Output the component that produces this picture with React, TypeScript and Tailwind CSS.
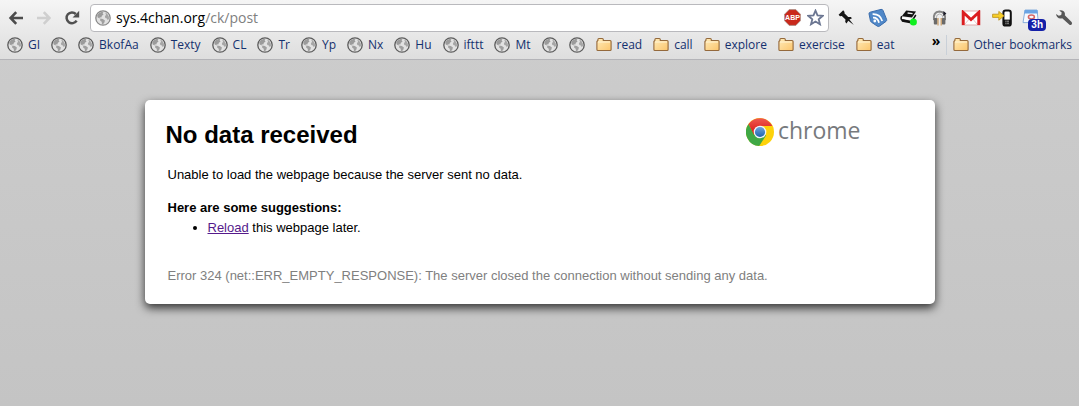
import type { ReactNode } from 'react';

type Bookmark = { label: string; kind: 'site' | 'folder'; name?: string };

const bookmarks: Bookmark[] = [
  { label: 'GI', kind: 'site' },
  { label: '', kind: 'site', name: 'Untitled bookmark' },
  { label: 'BkofAa', kind: 'site' },
  { label: 'Texty', kind: 'site' },
  { label: 'CL', kind: 'site' },
  { label: 'Tr', kind: 'site' },
  { label: 'Yp', kind: 'site' },
  { label: 'Nx', kind: 'site' },
  { label: 'Hu', kind: 'site' },
  { label: 'ifttt', kind: 'site' },
  { label: 'Mt', kind: 'site' },
  { label: '', kind: 'site', name: 'Untitled bookmark' },
  { label: '', kind: 'site', name: 'Untitled bookmark' },
  { label: 'read', kind: 'folder' },
  { label: 'call', kind: 'folder' },
  { label: 'explore', kind: 'folder' },
  { label: 'exercise', kind: 'folder' },
  { label: 'eat', kind: 'folder' },
];

function GlobeIcon({ light = false }: { light?: boolean }) {
  return (
    <svg width="16" height="16" viewBox="0 0 16 16" className="shrink-0" aria-hidden="true">
      <circle cx="8" cy="8" r="7.2" fill="#e2e2e2" stroke={light ? '#8a8a8a' : '#5c5c5c'} strokeWidth="1.3" />
      <path d="M2.2 5.2 4 3l3-1.3 1.4.8-.8 1.2 1 .9-1.7 1.2-.6 1.6-1.7-.2.3 1.3-2.2-1.1z" fill="#9b9b9b" />
      <path d="M5.3 8.6l2.6.4 2 1.4-.5 2-1.4 1.9-1 .1-.3-2.6-1.6-1.4z" fill="#a0a0a0" />
      <path d="M10.2 2.6l2 1.2 1.6 2.6.2 2.4-1.2 1.4-.9-1.7-1.6-.6-.4-1.8 1.2-1.1z" fill="#a6a6a6" />
    </svg>
  );
}

function FolderIcon() {
  return (
    <svg width="16" height="16" viewBox="0 0 16 16" className="shrink-0" aria-hidden="true">
      <defs>
        <linearGradient id="folder" x1="0" y1="0" x2="1" y2="1">
          <stop offset="0" stopColor="#ffebb9" />
          <stop offset="1" stopColor="#fbc56c" />
        </linearGradient>
      </defs>
      <path
        d="M.9 4.5 1.9 3.5V2.5q0-1 1-1h3.4q1 0 1 1v1h6.8q1 0 1 1v8q0 1-1 1H1.9q-1 0-1-1z"
        fill="url(#folder)"
        stroke="#94693c"
        strokeWidth="1.1"
      />
      <path d="M2 5h12" stroke="#fff4d6" strokeWidth="1" />
    </svg>
  );
}

function BackIcon() {
  return (
    <svg width="16" height="16" viewBox="0 0 16 16" fill="none" stroke="#4c4c4c" strokeWidth="2.6" aria-hidden="true">
      <path d="M15 8H3M8.2 2.2 2.6 8l5.6 5.8" />
    </svg>
  );
}

function ForwardIcon() {
  return (
    <svg width="16" height="16" viewBox="0 0 16 16" fill="none" stroke="#cfcfcf" strokeWidth="2.6" aria-hidden="true">
      <path d="M1 8h12M7.8 2.2 13.4 8l-5.6 5.8" />
    </svg>
  );
}

function ReloadIcon() {
  return (
    <svg width="16" height="16" viewBox="0 0 16 16" aria-hidden="true">
      <path d="M12.6 10.6A5.4 5.4 0 1 1 11.8 4" fill="none" stroke="#505050" strokeWidth="2.5" />
      <path d="M15.2.8v6.6H8.6z" fill="#505050" />
    </svg>
  );
}

function AdblockIcon() {
  return (
    <svg width="17" height="17" viewBox="0 0 17 17" aria-hidden="true">
      <path d="M5.2.6h6.6l4.6 4.6v6.6l-4.6 4.6H5.2L.6 11.8V5.2z" fill="#c9291c" stroke="#a89088" strokeWidth=".8" />
      <text x="8.5" y="11" textAnchor="middle" fontFamily="Liberation Sans, sans-serif" fontWeight="bold" fontSize="7" fill="#fff">
        ABP
      </text>
    </svg>
  );
}

function StarIcon() {
  return (
    <svg width="17" height="17" viewBox="0 0 17 17" aria-hidden="true">
      <path
        d="M8.5 1.6l2 4.8 5.2.4-4 3.4 1.3 5.1-4.5-2.8L4 15.3l1.3-5.1-4-3.4 5.2-.4z"
        fill="#fff"
        stroke="#6c7792"
        strokeWidth="1.8"
      />
    </svg>
  );
}

function PinIcon() {
  return (
    <svg width="18" height="18" viewBox="0 0 18 18" aria-hidden="true">
      <path d="M5.2 1.2 6.6 3l-.2 1.3 3.8 3.8 2.6-.2 1.2 1.3-2.6 1.2 4.4 5.6-5.6-4.2-1.6 2.6-1.4-1.4.3-2.6L3.8 7 2 7.2.6 5.8z" fill="#161616" />
    </svg>
  );
}

function FeedIcon() {
  return (
    <svg width="20" height="20" viewBox="0 0 20 20" aria-hidden="true">
      <path d="M2.2 4.2 13 1.4q1.5-.3 2 1l3.6 9q.4 1.2-.6 2l-6.6 4.8q-1 .6-2 0l-6-4q-.8-.6-1-1.6L1 5.8q-.1-1.2 1.2-1.6z" fill="#5088c8" stroke="#3a6cac" />
      <g fill="none" stroke="#fff" strokeWidth="1.7">
        <path d="M5 9.6q4.8-.2 6 5.2M4.6 6.2Q12 5.8 14.2 13" />
      </g>
      <circle cx="6.8" cy="13" r="1.4" fill="#fff" />
    </svg>
  );
}

function ReaderIcon() {
  return (
    <svg width="18" height="18" viewBox="0 0 18 18" aria-hidden="true">
      <path d="M6.2 1.5 16 2.6l-4 6L1.8 7.2z" fill="#111" />
      <path d="M7.6 4l5 .6" stroke="#eee" strokeWidth="1.4" />
      <path d="M1.8 7.2Q.4 9.4 1.8 11l9.6 2 4.4-7" fill="none" stroke="#111" strokeWidth="1.5" />
      <path d="M2.6 9l9 1.4" stroke="#fff" strokeWidth="1.3" />
      <path d="M2 11.4l9.4 1.8" stroke="#111" strokeWidth="2.6" />
      <circle cx="13.4" cy="13" r="3.5" fill="#10f020" />
    </svg>
  );
}

function HeadphonesIcon() {
  return (
    <svg width="16" height="16" viewBox="0 0 16 16" aria-hidden="true">
      <path d="M2 10Q.8 2 7.4 1.6 14.2 2 13 10" fill="none" stroke="#858585" strokeWidth="2" />
      <path d="M4.2 8Q4.4 4 7.6 4t3.4 4" fill="none" stroke="#b4b4b4" />
      <rect x="1.8" y="8" width="3.6" height="6.6" rx="1" fill="#6a6a6a" />
      <rect x="9.8" y="8" width="3.6" height="6.6" rx="1" fill="#6a6a6a" />
      <path d="M6 8v7.4M9.2 8v7.4" stroke="#c99a61" strokeWidth="1.2" />
      <path d="M11.4 1l3 2.6-3 2.6z" fill="#1c1c28" />
    </svg>
  );
}

function MailIcon() {
  return (
    <svg width="20" height="16" viewBox="0 0 20 16" aria-hidden="true">
      <rect x="1" y="1" width="18" height="14" fill="#fff" stroke="#d99" strokeWidth=".8" />
      <path d="M4 14l5-6M16 14l-5-6" stroke="#e3b5b5" strokeWidth=".8" />
      <path d="M2.3 15V2.4L10 9.6l7.7-7.2V15" fill="none" stroke="#dc1d20" strokeWidth="2.8" />
    </svg>
  );
}

function PhoneIcon() {
  return (
    <svg width="20" height="18" viewBox="0 0 20 18" aria-hidden="true">
      <rect x="11.4" y="1.6" width="7.4" height="15" rx="2.2" fill="#fff" stroke="#111" strokeWidth="2" />
      <path d="M12 10.6h6.4v5.2H12z" fill="#111" />
      <path d="M13.4 12.2h3.6M13.4 14.2h3.6" stroke="#ddd" strokeWidth=".9" strokeDasharray="1 .4" />
      <path d="M.6 5.2h6.2V2.4l5.4 4.4-5.4 4.4V8.4H.6z" fill="#f8cf28" stroke="#b98e18" strokeWidth=".8" />
    </svg>
  );
}

function CalendarIcon() {
  return (
    <svg width="22" height="18" viewBox="0 0 22 18" aria-hidden="true">
      <path d="M3 1h12l1.4 12.6H1z" fill="#f6faff" stroke="#8ab0dc" />
      <path d="M2.8 1h12.6l.5 3.6H2.2z" fill="#6aa4e4" />
      <ellipse cx="9.4" cy="8" rx="3" ry="1.9" fill="none" stroke="#d56565" strokeWidth="1.5" />
    </svg>
  );
}

function WrenchIcon() {
  return (
    <svg width="18" height="18" viewBox="0 0 18 18" aria-hidden="true">
      <path
        d="M4.2 1.4Q8.6.6 9.8 4q.3 1.2 0 2.2l6.8 6.8q1 1.2 0 2.4-1.2 1-2.4 0L7.2 9.2Q2 10.4 1 5l2.8 1.8 2.4-.8.5-2.4z"
        fill="#585858"
      />
    </svg>
  );
}

function ChromeLogo() {
  return (
    <svg width="28" height="28" viewBox="0 0 28 28" aria-hidden="true">
      <defs>
        <linearGradient id="red" x1="0" y1="0" x2="0" y2="1">
          <stop offset="0" stopColor="#ee5a50" />
          <stop offset="1" stopColor="#d8130f" />
        </linearGradient>
        <linearGradient id="blue" x1="0" y1="0" x2="0" y2="1">
          <stop offset="0" stopColor="#6fa5dc" />
          <stop offset="1" stopColor="#1e62ae" />
        </linearGradient>
      </defs>
      <circle cx="14" cy="14" r="14" fill="#fdd20a" />
      <path d="M2.5 6A14 14 0 0 0 13.2 28L20 17.5 14 14 8.4 17z" fill="#3fa845" />
      <path d="M2.5 6A14 14 0 0 1 26.4 8H14L8 16.8z" fill="url(#red)" />
      <circle cx="14" cy="14" r="6.3" fill="#f3f6fa" />
      <circle cx="14" cy="14" r="5.1" fill="url(#blue)" />
    </svg>
  );
}

const extensions: { name: string; icon: ReactNode; badge?: string }[] = [
  { name: 'Pin', icon: <PinIcon /> },
  { name: 'Feeds', icon: <FeedIcon /> },
  { name: 'Reader', icon: <ReaderIcon /> },
  { name: 'Music', icon: <HeadphonesIcon /> },
  { name: 'Mail', icon: <MailIcon /> },
  { name: 'Send to phone', icon: <PhoneIcon /> },
  { name: 'Calendar', icon: <CalendarIcon />, badge: '3h' },
  { name: 'Settings', icon: <WrenchIcon /> },
];

function Toolbar() {
  return (
    <div className="flex h-8 items-center pt-[3px]">
      <nav className="flex pl-0.5 pr-1" aria-label="Navigation">
        <button aria-label="Back" className="flex w-7 justify-center">
          <BackIcon />
        </button>
        <button aria-label="Forward" disabled className="flex w-7 justify-center">
          <ForwardIcon />
        </button>
        <button aria-label="Reload page" className="flex w-7 justify-center">
          <ReloadIcon />
        </button>
      </nav>

      <div className="relative flex h-7 min-w-0 flex-1 items-center rounded border border-[#b9b9bd] bg-white px-1">
        <GlobeIcon light />
        <input
          aria-label="Address"
          defaultValue="sys.4chan.org/ck/post"
          className="min-w-0 flex-1 px-[5px] text-sm text-transparent caret-black outline-none"
        />
        {/* two-tone address shown over the field */}
        <span aria-hidden="true" className="pointer-events-none absolute left-[25px] text-sm text-[#808080]">
          <span className="text-black">sys.4chan.org</span>/ck/post
        </span>
        <button aria-label="Adblock" className="mr-1.5">
          <AdblockIcon />
        </button>
        <button aria-label="Bookmark this page">
          <StarIcon />
        </button>
      </div>

      <div className="flex pl-0.5">
        {extensions.map((ext) => (
          <button key={ext.name} aria-label={ext.name} className="relative flex h-7 w-[31px] items-center justify-center">
            {ext.icon}
            {ext.badge && (
              <span className="absolute right-0.5 bottom-px rounded-sm bg-[#1420a8] px-[3px] font-['Liberation_Sans',Arial,sans-serif] text-[10px] leading-3 font-bold text-white">
                {ext.badge}
              </span>
            )}
          </button>
        ))}
      </div>
    </div>
  );
}

function BookmarksBar() {
  return (
    <div className="flex h-[27px] items-center px-[7px] pb-px text-xs text-[#14306e]">
      <div className="flex min-w-0 flex-1 gap-[11px] overflow-hidden">
        {bookmarks.map((item, i) => (
          <a key={i} href="#" aria-label={item.name} className="flex shrink-0 items-center gap-[5px]">
            {item.kind === 'folder' ? <FolderIcon /> : <GlobeIcon />}
            {item.label && <span>{item.label}</span>}
          </a>
        ))}
      </div>
      <button aria-label="More bookmarks" className="pb-2 text-sm leading-4 font-bold text-black">
        »
      </button>
      <div className="ml-1.5 h-5 w-px bg-[#c9d0d8]" />
      <button className="ml-1.5 flex items-center gap-1">
        <FolderIcon />
        Other bookmarks
      </button>
    </div>
  );
}

function ErrorCard() {
  return (
    <main className="mx-auto mt-10 w-full max-w-[790px] rounded-[5px] bg-white px-5 py-[18px] font-['Liberation_Sans',Arial,sans-serif] text-[13px] leading-5 text-black shadow-[0_4px_10px_rgba(0,0,0,0.75)]">
      <div className="flex items-start justify-between pr-[54px]">
        <h1 className="pt-px pl-px text-2xl font-bold">No data received</h1>
        <div className="flex h-7 items-center gap-1 font-['Open_Sans','Noto_Sans',sans-serif] text-[23px] leading-7 text-[#777a7d]">
          <ChromeLogo />
          <span className="pb-1">chrome</span>
        </div>
      </div>
      <div className="px-[3px]">
        <p className="mt-3.5">Unable to load the webpage because the server sent no data.</p>
        <p className="mt-[13px] font-bold">Here are some suggestions:</p>
        <ul className="list-disc pl-10">
          <li>
            <a href="#" className="text-[#551a8b] underline">
              Reload
            </a>{' '}
            this webpage later.
          </li>
        </ul>
        <p className="mt-7 text-[#808080]">
          Error 324 (net::ERR_EMPTY_RESPONSE): The server closed the connection without sending any data.
        </p>
      </div>
    </main>
  );
}

export default function App() {
  return (
    <div className="min-h-screen bg-linear-to-b from-[#cdcdcd] to-[#c4c4c4] font-['Open_Sans','Noto_Sans',sans-serif]">
      <header className="border-b border-[#b4b4b8] bg-linear-to-b from-[#f5f5f5] to-[#dedede]">
        <Toolbar />
        <BookmarksBar />
      </header>
      <ErrorCard />
    </div>
  );
}
